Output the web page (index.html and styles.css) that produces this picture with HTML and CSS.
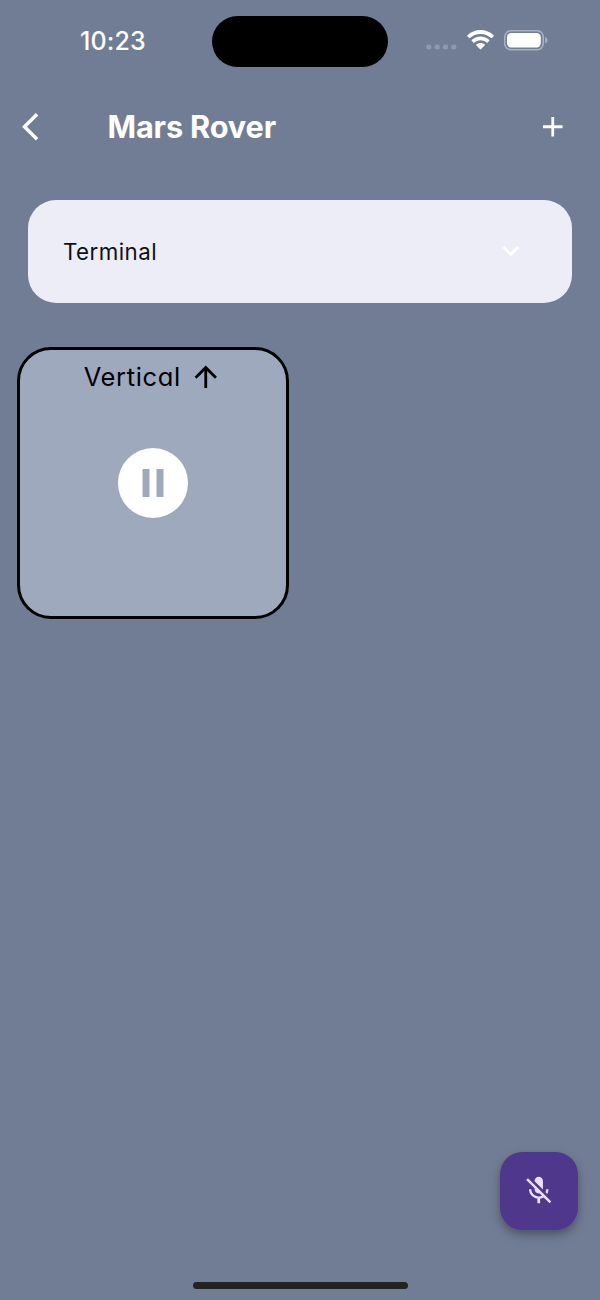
FILE: index.html
```html
<!DOCTYPE html>
<html lang="en">
<head>
<meta charset="utf-8">
<title>Mars Rover</title>
<link rel="stylesheet" href="styles.css">
</head>
<body>
<div class="screen">
  <div class="status">
    <div class="time">10:23</div>
    <div class="island"></div>
    <div class="indicators">
      <svg class="dots" width="32" height="6" viewBox="0 0 32 6"><rect x="0.3" y="0.5" width="5" height="5" rx="2"/><rect x="8.7" y="0.5" width="5" height="5" rx="2"/><rect x="17" y="0.5" width="5" height="5" rx="2"/><rect x="25.3" y="0.5" width="5" height="5" rx="2"/></svg>
      <svg class="wifi" width="27" height="20" viewBox="0 0 27 20"><path d="M13.5 0C8.3 0 3.7 2 .3 5.4c-.2.2-.2.6 0 .8l1.9 1.9c.2.2.5.2.7 0C5.7 5.4 9.400 3.900 13.500 3.900s7.800 1.500 10.600 4.200c.2.2.5.2.7 0l1.900-1.900c.2-.2.2-.6 0-.8C23.300 2 18.700 0 13.500 0z"/><path d="M13.500 6.500c-3.400 0-6.500 1.300-8.800 3.500-.2.2-.2.600 0 .8l1.900 1.900c.2.2.5.2.7 0 1.700-1.500 3.800-2.400 6.200-2.400s4.500.9 6.200 2.400c.2.2.5.2.7 0l1.900-1.900c.2-.2.2-.6 0-.8-2.300-2.200-5.400-3.500-8.800-3.500z"/><path d="M13.500 12.900c-1.700 0-3.200.6-4.300 1.600-.2.2-.2.500 0 .7l3.900 4c.2.200.6.200.8 0l3.900-4c.2-.2.2-.5 0-.7-1.100-1-2.600-1.600-4.300-1.600z"/></svg>
      <svg class="battery" width="44" height="21" viewBox="0 0 44 21"><rect class="shell" x="0.800" y="0.800" width="38.400" height="18.900" rx="6"/><rect x="3" y="3" width="33.800" height="14.400" rx="4.200"/><path class="tip" d="M41.200 7v6.600c1.400-.5 2.300-1.800 2.300-3.300s-.9-2.800-2.300-3.300z"/></svg>
    </div>
  </div>
  <div class="appbar">
    <svg class="icon" viewBox="0 0 24 24"><path d="M11.670 3.870L9.900 2.100 0 12l9.900 9.900 1.770-1.770L3.540 12z"/></svg>
    <h1 class="title">Mars Rover</h1>
    <svg class="icon" viewBox="0 0 24 24"><path d="M19 13h-6v6h-2v-6H5v-2h6V5h2v6h6v2z"/></svg>
  </div>
  <div class="select">
    <span class="select-label">Terminal</span>
    <svg class="icon" viewBox="0 0 24 24"><path d="M7.410 8.590L12 13.170l4.590-4.580L18 10l-6 6-6-6z"/></svg>
  </div>
  <div class="grid">
    <div class="card">
      <div class="card-head">
        <span class="card-label">Vertical</span>
        <svg class="icon" viewBox="0 0 24 24"><path d="M4 12l1.410 1.410L11 7.830V20h2V7.830l5.580 5.590L20 12l-8-8-8 8z"/></svg>
      </div>
      <svg class="pause" viewBox="2 2 20 20"><path fill-rule="evenodd" d="M12 2a10 10 0 1 0 0 20 10 10 0 0 0 0-20zM11 16H9V8h2zM15 16h-2V8h2z"/></svg>
    </div>
  </div>
  <div class="bottom">
    <div class="fab">
      <svg class="icon" viewBox="0 0 24 24"><path d="M19 11h-1.700c0 .74-.16 1.430-.43 2.050l1.230 1.230c.56-.98.9-2.090.9-3.280zm-4.020.17c0-.06.020-.11.020-.17V5c0-1.660-1.340-3-3-3S9 3.340 9 5v.18l5.980 5.990zM4.270 3L3 4.270l6.010 6.010V11c0 1.660 1.330 3 2.990 3 .22 0 .44-.03.65-.08l1.660 1.660c-.71.33-1.500.52-2.310.52-2.760 0-5.300-2.100-5.300-5.100H5c0 3.410 2.720 6.230 6 6.720V21h2v-3.280c.91-.13 1.770-.45 2.540-.9L19.730 21 21 19.730 4.270 3z"/></svg>
    </div>
    <div class="home"></div>
  </div>
</div>
</body>
</html>
```
FILE: styles.css
```css
* { box-sizing: border-box; }
body { margin: 0; font-family: Inter, "Liberation Sans", sans-serif; }
svg { display: block; flex: none; }
.screen { width: 600px; height: 1300px; background: #717d95; display: flex; flex-direction: column; overflow: hidden; }
.status { height: 83px; display: grid; grid-template-columns: 212px 176px 212px; align-items: start; color: #fff; }
.time { margin: 26px 0 0 80px; font-size: 25px; line-height: 30px; font-weight: 500; letter-spacing: .1px; white-space: nowrap; }
.island { height: 51px; margin-top: 16px; border-radius: 26px; background: #000; }
.indicators { display: flex; align-items: flex-start; padding: 30px 0 0 38px; fill: #fff; }
.dots { margin-top: 14px; fill: #9097b3; }
.wifi { margin-left: 9px; }
.battery { margin-left: 10px; }
.shell { fill: none; stroke: #a9b0c3; stroke-width: 1.6; }
.tip { fill: #a9b0c3; }
.icon { width: 33.5px; height: 33.5px; }
.appbar { height: 88px; display: flex; align-items: center; padding: 0 30.5px 0 22px; color: #fff; fill: #fff; }
.title { margin: 0 0 0 52px; flex: 1; font-size: 30.7px; line-height: 40px; font-weight: 700; letter-spacing: -.15px; white-space: nowrap; }
.select { margin: 28.5px 28px 0; height: 103px; border-radius: 28px; background: #ededf7; display: flex; align-items: center; justify-content: space-between; padding: 0 44.5px 0 35px; fill: #fff; }
.select-label { font-size: 22.3px; line-height: 30px; padding-top: 1px; letter-spacing: .45px; color: #101014; font-weight: 400; }
.grid { padding: 44.5px 17px 0; display: grid; grid-template-columns: 272px; }
.card { height: 272px; border: 3px solid #000; border-radius: 34px; background: #9fa9be; display: flex; flex-direction: column; align-items: center; padding-top: 8.5px; }
.card-head { display: flex; align-items: center; height: 36px; gap: 8px; }
.card-label { font-size: 25.5px; line-height: 36px; letter-spacing: .65px; color: #000; font-weight: 400; font-feature-settings: "cv11" 1; }
.pause { width: 70px; height: 70px; margin-top: 53.5px; fill: #fff; }
.bottom { margin-top: auto; display: flex; flex-direction: column; }
.fab { width: 78px; height: 78px; border-radius: 22.5px; margin: 0 22.5px 52px auto; background: #4f378b; display: flex; align-items: center; justify-content: center; fill: #eaddff; box-shadow: 0 4px 7px rgba(0,0,0,.22), 0 6px 14px rgba(0,0,0,.13); }
.home { width: 215px; height: 7px; border-radius: 4px; background: #232323; margin: 0 auto 11px; }
```
